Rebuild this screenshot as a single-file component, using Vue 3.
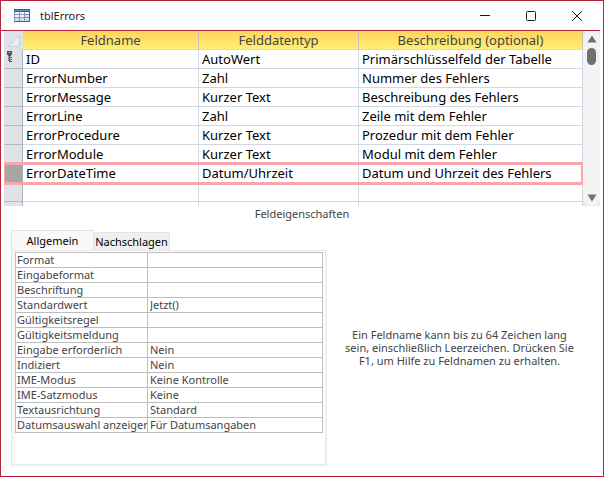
<script setup>
import { ref } from 'vue'

const fields = [
  { name: 'ID', type: 'AutoWert', note: 'Primärschlüsselfeld der Tabelle', key: true },
  { name: 'ErrorNumber', type: 'Zahl', note: 'Nummer des Fehlers' },
  { name: 'ErrorMessage', type: 'Kurzer Text', note: 'Beschreibung des Fehlers' },
  { name: 'ErrorLine', type: 'Zahl', note: 'Zeile mit dem Fehler' },
  { name: 'ErrorProcedure', type: 'Kurzer Text', note: 'Prozedur mit dem Fehler' },
  { name: 'ErrorModule', type: 'Kurzer Text', note: 'Modul mit dem Fehler' },
  { name: 'ErrorDateTime', type: 'Datum/Uhrzeit', note: 'Datum und Uhrzeit des Fehlers' },
  { name: '', type: '', note: '' },
  { name: '', type: '', note: '' },
]
const selected = ref(6)

const properties = ref([
  { label: 'Format', value: '' },
  { label: 'Eingabeformat', value: '' },
  { label: 'Beschriftung', value: '' },
  { label: 'Standardwert', value: 'Jetzt()' },
  { label: 'Gültigkeitsregel', value: '' },
  { label: 'Gültigkeitsmeldung', value: '' },
  { label: 'Eingabe erforderlich', value: 'Nein' },
  { label: 'Indiziert', value: 'Nein' },
  { label: 'IME-Modus', value: 'Keine Kontrolle' },
  { label: 'IME-Satzmodus', value: 'Keine' },
  { label: 'Textausrichtung', value: 'Standard' },
  { label: 'Datumsauswahl anzeiger', value: 'Für Datumsangaben' },
])
</script>

<template>
  <main class="window">
    <header class="titlebar">
      <svg class="app-icon" width="16" height="14" viewBox="0 0 16 14" shape-rendering="crispEdges">
        <rect width="16" height="13" fill="#8497c0" />
        <rect width="16" height="3" fill="#3f5a99" />
        <rect x="1" y="1" width="14" height="1" fill="#6f8ac2" />
        <rect x="15" width="1" height="13" fill="#4a5f92" />
        <rect y="12" width="16" height="1" fill="#4a5f92" />
        <g fill="#f4f8ff">
          <rect x="1" y="3" width="4" height="2" /><rect x="6" y="3" width="4" height="2" /><rect x="11" y="3" width="4" height="2" />
          <rect x="1" y="6" width="4" height="2" /><rect x="6" y="6" width="4" height="2" />
        </g>
        <g fill="#cfdef5">
          <rect x="11" y="6" width="4" height="2" />
          <rect x="1" y="9" width="4" height="3" /><rect x="6" y="9" width="4" height="3" /><rect x="11" y="9" width="4" height="3" />
        </g>
      </svg>
      <h1>tblErrors</h1>
      <div class="controls">
        <button type="button" aria-label="Minimieren">
          <svg width="12" height="12" viewBox="0 0 12 12"><path d="M1 5.5H11" stroke="#1a1a1a" /></svg>
        </button>
        <button type="button" aria-label="Maximieren">
          <svg width="12" height="12" viewBox="0 0 12 12"><rect x="1.5" y="1.5" width="9" height="9" rx="1" fill="none" stroke="#1a1a1a" /></svg>
        </button>
        <button type="button" aria-label="Schließen">
          <svg width="12" height="12" viewBox="0 0 12 12"><path d="M1 1L11 11M11 1L1 11" stroke="#1a1a1a" /></svg>
        </button>
      </div>
    </header>

    <section class="design">
      <div class="grid">
        <table class="fields">
          <colgroup><col class="c-sel" /><col class="c-name" /><col class="c-type" /><col /></colgroup>
          <thead>
            <tr>
              <td class="corner">
                <svg width="12" height="12" viewBox="0 0 12 12"><path d="M11.5 0.5V11.5H0.5Z" fill="#e9eef5" stroke="#c5d0de" stroke-width="1" /></svg>
              </td>
              <th>Feldname</th>
              <th>Felddatentyp</th>
              <th>Beschreibung (optional)</th>
            </tr>
          </thead>
          <tbody>
            <tr v-for="(f, i) in fields" :key="i" :class="{ selected: i === selected }" @click="selected = i">
              <td class="marker">
                <svg v-if="f.key" width="6" height="12" viewBox="0 0 6 12" shape-rendering="crispEdges">
                  <path d="M0 0H5V4H4V5H1V4H0Z" fill="#555" />
                  <path d="M2 1H3V2H2Z" fill="#ccc" />
                  <path d="M1 5H2V10H1Z" fill="#999" />
                  <path d="M2 5H4V6H5V7H4V8H5V9H4V10H5V11H2Z" fill="#555" />
                  <path d="M3 5H4V10H3Z" fill="#aaa" />
                </svg>
              </td>
              <td>{{ f.name }}</td>
              <td>{{ f.type }}</td>
              <td>{{ f.note }}</td>
            </tr>
          </tbody>
        </table>
      </div>
      <div class="scroll">
        <button type="button" aria-label="Nach oben">
          <svg width="10" height="8" viewBox="0 0 10 8"><path d="M5 0.5L9.5 7.5H0.5Z" fill="#707070" /></svg>
        </button>
        <div class="thumb"></div>
        <button type="button" class="down" aria-label="Nach unten">
          <svg width="10" height="8" viewBox="0 0 10 8"><path d="M5 7.5L9.5 0.5H0.5Z" fill="#707070" /></svg>
        </button>
      </div>
    </section>

    <h2>Feldeigenschaften</h2>

    <section class="lower">
      <div class="tabs-box">
        <div class="tabs" role="tablist">
          <button type="button" role="tab" class="tab active" aria-selected="true">Allgemein</button>
          <button type="button" role="tab" class="tab" aria-selected="false">Nachschlagen</button>
        </div>
        <div class="sheet">
          <table class="props">
            <colgroup><col class="c-label" /><col /></colgroup>
            <tbody>
              <tr v-for="(p, i) in properties" :key="p.label">
                <th scope="row"><label :for="'prop-' + i">{{ p.label }}</label></th>
                <td><input :id="'prop-' + i" v-model="p.value" type="text" /></td>
              </tr>
            </tbody>
          </table>
        </div>
      </div>
      <p class="hint">Ein Feldname kann bis zu 64 Zeichen lang sein, einschließlich Leerzeichen. Drücken Sie F1, um Hilfe zu Feldnamen zu erhalten.</p>
    </section>
  </main>
</template>

<style>
body {
  margin: 0;
  background: #fff;
}
</style>

<style scoped>
* {
  box-sizing: border-box;
}
.window {
  display: flex;
  flex-direction: column;
  min-height: 100vh;
  border: 1px solid #b5233b;
  background: #fff;
  color: #444;
  font: 11px/13px "Noto Sans", "Open Sans", sans-serif;
}
button {
  margin: 0;
  padding: 0;
  border: 0;
  background: none;
  font: inherit;
  color: inherit;
}
svg {
  display: block;
}
.titlebar {
  display: flex;
  align-items: center;
  height: 30px;
  margin-right: 3px;
  padding-left: 13px;
  border-bottom: 1px solid #b5233b;
}
h1 {
  margin: 0 auto 0 10px;
  font-size: 11px;
  line-height: 16px;
  font-weight: 400;
  color: #222;
}
.controls {
  display: flex;
}
.controls button {
  display: grid;
  place-items: center;
  width: 46px;
  height: 28px;
}
.design {
  display: flex;
  height: 175px;
  margin: 0 3px;
  background: #e9e9e9;
}
.grid {
  flex: 1;
  overflow: hidden;
  background: #fff;
}
table {
  width: 100%;
  border-collapse: separate;
  border-spacing: 0;
  table-layout: fixed;
}
.c-sel {
  width: 19px;
}
.c-name {
  width: 176px;
}
.c-type {
  width: 160px;
}
.fields {
  font-size: 13px;
  line-height: 18px;
  color: #000;
}
.fields th,
.fields td {
  height: 19px;
  padding: 0 3px;
  border-right: 1px solid #d0d7e5;
  border-bottom: 1px solid #d0d7e5;
  white-space: nowrap;
}
.fields th {
  background: linear-gradient(#ffd45c, #ffef74);
  border-right-color: #c9c3b4;
  font-weight: 400;
  color: #444;
}
.fields .corner,
.fields .marker {
  padding: 1px 3px 0;
  background: #dfe3e8;
  border-right-color: #a9b0ba;
  border-bottom-color: #b4bac3;
  vertical-align: top;
}
.fields .corner {
  padding: 4px 0 0 4px;
  border-color: #dfe3e8;
}
.fields .selected .marker {
  background: #a6a6a6;
}
.selected {
  outline: 3px solid #f8a8ac;
  outline-offset: -1px;
}
.selected td:last-child {
  box-shadow: inset -1px 0 #f8a8ac;
}
.scroll {
  display: flex;
  flex-direction: column;
  align-items: center;
  width: 17px;
  padding: 4px 0;
  border-radius: 8px;
  background: #f3f3f3;
}
.thumb {
  width: 9px;
  height: 17px;
  margin-top: 5px;
  border-radius: 5px;
  background: #707070;
}
.down {
  margin-top: auto;
}
h2 {
  margin: 1px 0 10px;
  text-align: center;
  font-size: 11px;
  line-height: 13px;
  font-weight: 400;
}
.lower {
  display: flex;
  flex: 1;
  padding: 0 26px 10px 10px;
  gap: 15px;
}
.tabs-box {
  display: flex;
  flex-direction: column;
  width: 316px;
}
.tabs {
  display: flex;
  align-items: flex-end;
}
.tab {
  height: 18px;
  width: 76px;
  border: 1px solid #e3e3e3;
  border-bottom: 0;
  border-left: 0;
  background: #f0f0f0;
  color: #000;
  white-space: nowrap;
}
.tab.active {
  height: 20px;
  width: 83px;
  padding-bottom: 1px;
  border-left: 1px solid #e3e3e3;
  background: #f9f9f9;
}
.sheet {
  flex: 1;
  padding: 1px 3px 0;
  border: 1px solid #e6e6e6;
  border-right: 2px solid #ececec;
  border-bottom: 2px solid #ececec;
  background: linear-gradient(90deg, #f7f7f7 3px, #fff 3px);
}
.c-label {
  width: 132px;
}
.props {
  width: 308px;
  border-top: 1px solid #bdbdbd;
  border-left: 1px solid #bdbdbd;
  background: #fff;
}
.props th,
.props td {
  height: 15px;
  padding: 0 0 0 2px;
  border-right: 1px solid #bdbdbd;
  border-bottom: 1px solid #bdbdbd;
  text-align: left;
  font-weight: 400;
  line-height: 14px;
  white-space: nowrap;
  overflow: hidden;
}
.props th {
  padding-left: 1px;
}
.props label {
  display: block;
}
.props input {
  display: block;
  width: 100%;
  height: 14px;
  padding: 0;
  border: 0;
  background: none;
  font: inherit;
  color: inherit;
  outline: 0;
}
.hint {
  flex: 1;
  align-self: flex-start;
  margin: 98px 0 0;
  text-align: center;
}
</style>
